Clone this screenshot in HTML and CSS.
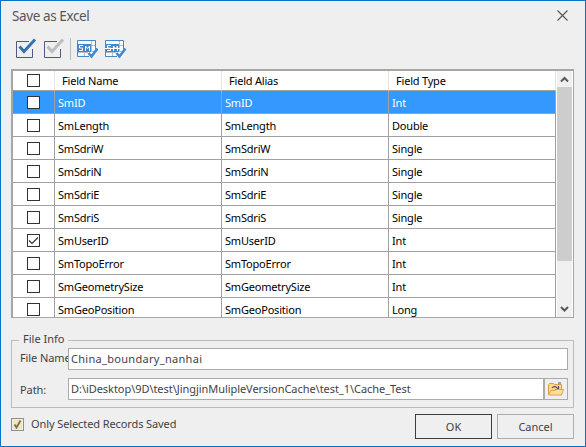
FILE: index.html
```
<!DOCTYPE html>
<html lang="en">
<head>
<meta charset="utf-8">
<title>Save as Excel</title>
<link rel="stylesheet" href="styles.css">
</head>
<body>
<main class="dialog">
  <header class="titlebar">
    <h1>Save as Excel</h1>
    <svg class="close" width="11" height="11" viewBox="0 0 11 11"><path d="M.5.5l10 10M10.5.5l-10 10" fill="none" stroke="#55554d" stroke-width="1.1"/></svg>
  </header>
  <div class="toolbar">
    <svg width="21" height="21" viewBox="0 0 21 21"><path d="M16.5 11v8.500H.5v-16H13" fill="none" stroke="#505888"/><path d="M3.500 8.500l4.500 5L19 1.500" fill="none" stroke="#3973ad" stroke-width="3"/></svg>
    <svg width="21" height="21" viewBox="0 0 21 21"><path d="M16.500 11v8.500H.5v-16H13" fill="none" stroke="#505888"/><path d="M3.500 8.500l4.500 5L19 1.500" fill="none" stroke="#bdbdc0" stroke-width="3"/></svg>
    <span class="separator"></span>
    <svg width="21" height="21" viewBox="0 0 21 21"><path d="M1 3h18v16H1z" fill="#f8fbfe"/><path d="M1 14.500h10M7.500 14v4M14.500 3v11M14 7.500h4M14 13.500h4" fill="none" stroke="#b8bdc3"/><path d="M18.500 11V2.500H.5v16H12" fill="none" stroke="#4288cb"/><path d="M0 6h14v8H0z" fill="#4288cb"/><path d="M6 7.500H2.500v2.500h3v2.500H2M8.500 13V8l2 2.500 2-2.500v5" fill="none" stroke="#fff"/><path d="M11.500 15l3 3.500 6-8" fill="none" stroke="#4288cb" stroke-width="2.600"/></svg>
    <svg width="21" height="21" viewBox="0 0 21 21"><path d="M1 3h18v16H1z" fill="#f8fbfe"/><path d="M1 14.500h10M7.500 14v4M14.500 3v11M14 7.500h4M14 13.500h4" fill="none" stroke="#b8bdc3"/><path d="M18.500 11V2.500H.5v16H12" fill="none" stroke="#4288cb"/><path d="M0 6h14v8H0z" fill="#4288cb"/><path d="M6 7.500H2.500v2.500h3v2.500H2M8.500 13V8l2 2.500 2-2.500v5M0 10.500h15" fill="none" stroke="#fff"/><path d="M11.500 15l3 3.500 6-8" fill="none" stroke="#4288cb" stroke-width="2.600"/></svg>
  </div>
  <section class="grid">
    <div class="rows">
      <div class="row head"><span class="pick"><i class="box"></i></span><span>Field Name</span><span>Field Alias</span><span>Field Type</span></div>
      <div class="row selected"><span class="pick"><i class="box"></i></span><span>SmID</span><span>SmID</span><span>Int</span></div>
      <div class="row"><span class="pick"><i class="box"></i></span><span>SmLength</span><span>SmLength</span><span>Double</span></div>
      <div class="row"><span class="pick"><i class="box"></i></span><span>SmSdriW</span><span>SmSdriW</span><span>Single</span></div>
      <div class="row"><span class="pick"><i class="box"></i></span><span>SmSdriN</span><span>SmSdriN</span><span>Single</span></div>
      <div class="row"><span class="pick"><i class="box"></i></span><span>SmSdriE</span><span>SmSdriE</span><span>Single</span></div>
      <div class="row"><span class="pick"><i class="box"></i></span><span>SmSdriS</span><span>SmSdriS</span><span>Single</span></div>
      <div class="row"><span class="pick"><i class="box"><svg width="11" height="11" viewBox="0 0 11 11"><path d="M1 5.500l3 3 6-6" fill="none" stroke="#333" stroke-width="1.200"/></svg></i></span><span>SmUserID</span><span>SmUserID</span><span>Int</span></div>
      <div class="row"><span class="pick"><i class="box"></i></span><span>SmTopoError</span><span>SmTopoError</span><span>Int</span></div>
      <div class="row"><span class="pick"><i class="box"></i></span><span>SmGeometrySize</span><span>SmGeometrySize</span><span>Int</span></div>
      <div class="row"><span class="pick"><i class="box"></i></span><span>SmGeoPosition</span><span>SmGeoPosition</span><span>Long</span></div>
    </div>
    <div class="scrollbar">
      <svg width="15" height="17" viewBox="0 0 15 17"><path d="M4 10.500L7.500 7l3.500 3.500" fill="none" stroke="#58584e" stroke-width="2"/></svg>
      <div class="thumb"></div>
      <svg class="down" width="15" height="17" viewBox="0 0 15 17"><path d="M4 7l3.500 3.500L11 7" fill="none" stroke="#58584e" stroke-width="2"/></svg>
    </div>
  </section>
  <fieldset class="info">
    <legend>File Info</legend>
    <div class="field"><label>File Name</label><div class="input name">China_boundary_nanhai</div></div>
    <div class="field"><label>Path:</label><div class="input path">D:\iDesktop\9D\test\JingjinMulipleVersionCache\test_1\Cache_Test</div>
      <div class="browse"><svg width="16" height="15" viewBox="0 0 16 15"><path d="M.5 12V2.500l1-1h4l1 1h7V12z" fill="#fbd88d" stroke="#d99b43"/><path d="M10 1h3" stroke="#3b9be8" stroke-width="1.500"/><path d="M4 6c1.500-2 4-2 6 1M10.500 4v3.500H7" fill="none" stroke="#4b5366" stroke-width="1.200"/><path d="M.5 13l2.500-4.500h4l1-1h7.500L13.500 13z" fill="#ffdf9a" stroke="#dfa34e"/></svg></div>
    </div>
  </fieldset>
  <footer class="footer">
    <span class="check"><svg width="11" height="11" viewBox="0 0 11 11"><path d="M2.500 5.500l2 3 4-7" fill="none" stroke="#716e68" stroke-width="1.800"/></svg></span>
    <span class="only">Only Selected Records Saved</span>
    <div class="button ok">OK</div>
    <div class="button">Cancel</div>
  </footer>
</main>
</body>
</html>
```

FILE: styles.css
```
* { box-sizing: border-box; }
body { margin: 0; font: 11px/16px "Noto Sans", sans-serif; color: #3f3f46; }
svg { display: block; flex: none; }
.dialog { width: 586px; height: 447px; background: #efefef; border: 1px solid #0a72c4; padding: 0 11px 0 10px; overflow: hidden; }
.titlebar { height: 35px; display: flex; justify-content: space-between; padding: 7px 6px 0 1px; }
h1 { margin: 0; font-size: 13.5px; font-weight: 400; line-height: 17px; color: #55555a; letter-spacing: -.4px; }
.close { margin-top: 2px; }
.toolbar { height: 33px; display: flex; padding: 2px 0 0 5px; gap: 7px; }
.separator { width: 1px; height: 22px; background: #bcbcbc; margin: 0 -1px 0 -2px; }
.grid { width: 563px; height: 249px; border: 1px solid #a6a6a6; border-width: 2px 1px 1px 2px; background: #fff; display: flex; overflow: hidden; color: #000; letter-spacing: -.2px; }
.rows { width: 543px; flex: none; }
.row { height: 23px; display: grid; grid-template-columns: 42px 167px 167px 167px; }
.row > span { border-right: 1px solid #a0a0a0; border-bottom: 1px solid #a0a0a0; padding: 4px 0 0 3px; white-space: nowrap; }
.row.head { height: 20px; }
.row.head > span { padding: 2px 0 0 7px; border-right-color: #e8e2da; }
.row.selected { background: #3399ff; color: #fff; }
.row > .pick, .row.head > .pick { display: flex; justify-content: center; align-items: center; padding: 0; }
.box { width: 13px; height: 13px; border: 1px solid #333; background: #fff; }
.scrollbar { width: 15px; margin-left: 1px; background: #f0f0f0; display: flex; flex-direction: column; }
.thumb { height: 174px; margin-top: -1px; background: #cdcdcd; }
.down { margin-top: auto; }
.info { position: relative; margin: 22px 0 0; padding: 7px 5px 0 8px; width: 563px; height: 68px; border: 1px solid #bcbcbc; min-width: 0; }
.info legend { position: absolute; top: -10px; left: 7px; padding: 0 4px; background: #efefef; }
.field { display: flex; height: 22px; }
.field + .field { margin-top: 8px; }
label { width: 48px; white-space: nowrap; padding-top: 2px; letter-spacing: -.1px; }
.field + .field label { padding-top: 4px; }
.input { flex: 1; height: 22px; border: 1px solid #ababab; background: #fff; padding: 2px 2px; white-space: nowrap; }
.name { letter-spacing: .3px; }
.path { flex: none; width: 476px; letter-spacing: -.05px; }
.browse { width: 24px; border: 1px solid #ababab; padding: 3px 0 0 3px; }
.footer { display: flex; padding-top: 6px; }
.check { width: 13px; height: 13px; margin-top: 4px; border: 1px solid #8e8f8f; background: #f8e5b6; box-shadow: inset 0 0 0 1px #e8eef2; }
.only { margin: 2px auto 0 7px; letter-spacing: -.1px; }
.button { width: 77px; height: 25px; border: 1px solid #adadad; text-align: center; line-height: 24px; }
.ok { border-color: #3c3c3c; margin-right: 5px; }
```
